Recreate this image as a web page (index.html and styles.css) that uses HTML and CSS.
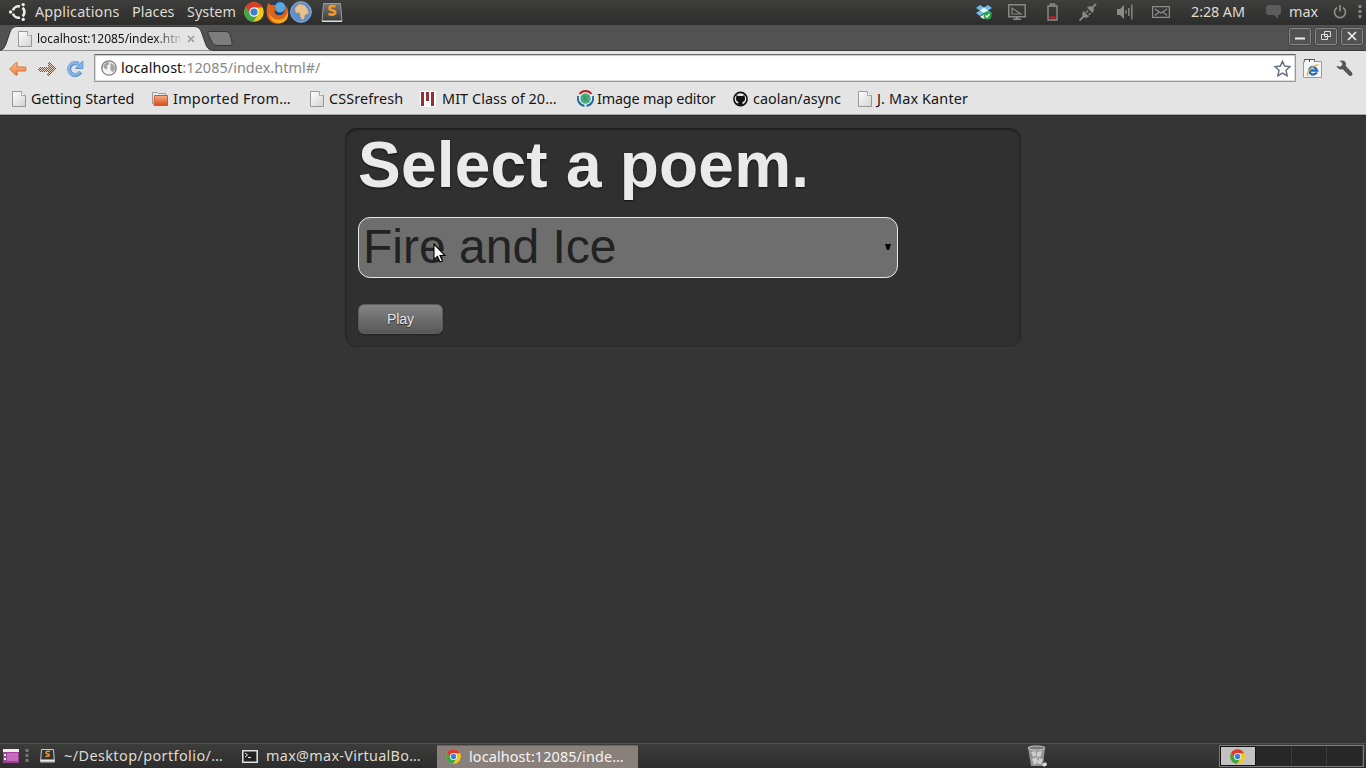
FILE: index.html
```html
<!DOCTYPE html>
<html lang="en">
<head>
<meta charset="utf-8">
<title>localhost:12085/index.html#/</title>
<link rel="stylesheet" href="styles.css">
</head>
<body>
<svg class="defs" width="0" height="0">
  <defs>
    <linearGradient id="paper" x1="0" y1="0" x2="1" y2="1"><stop offset="0" stop-color="#fff"/><stop offset="1" stop-color="#d2d2d2"/></linearGradient>
    <linearGradient id="folder" x1="0" y1="0" x2="0" y2="1"><stop offset="0" stop-color="#f5b184"/><stop offset="1" stop-color="#d5491c"/></linearGradient>
    <linearGradient id="arrow" x1="0" y1="0" x2="0" y2="1"><stop offset="0" stop-color="#f9c090"/><stop offset="1" stop-color="#ec7c3c"/></linearGradient>
    <linearGradient id="key" x1="0" y1="0" x2="0" y2="1"><stop offset="0" stop-color="#777"/><stop offset="1" stop-color="#3c3c3c"/></linearGradient>
    <pattern id="dots" width="2" height="2" patternUnits="userSpaceOnUse"><rect width="2" height="2" fill="#ead6c8"/><rect width="1" height="1" fill="#8a5030"/><rect x="1" y="1" width="1" height="1" fill="#8a5030"/></pattern>
    <symbol id="page" viewBox="0 0 15 16"><path d="M.5.5h9l4 4v11H.5z" fill="url(#paper)" stroke="#979797"/><path d="M9.5.5v4h4" fill="#fff" stroke="#a8a8a8"/></symbol>
    <symbol id="chrome" viewBox="0 0 20 20">
      <circle cx="10" cy="10" r="9.8" fill="#f4c916"/>
      <path d="M1.5 5.1A9.8 9.8 0 0 1 18.6 5.5H10L6 12.5z" fill="#dd3a2d"/>
      <path d="M1.5 5.1A9.8 9.8 0 0 0 9.3 19.8L14 12.3 10 14.5 6 12.3z" fill="#3fa648"/>
      <circle cx="10" cy="10" r="4.8" fill="#f3f6f8"/><circle cx="10" cy="10" r="3.6" fill="#3f7fcb"/>
    </symbol>
  </defs>
</svg>

<header class="panel">
  <svg class="ubuntu" width="18" height="20" viewBox="0 0 18 20"><g fill="none" stroke="#eee" stroke-width="2.6"><path d="M14.6 5.8A5.7 5.7 0 0 1 14.6 14.2"/><path d="M11.9 15.5A5.7 5.7 0 0 1 5 11.6"/><path d="M11.9 4.5A5.7 5.7 0 0 0 5 8.4"/></g><g fill="#eee"><circle cx="2.6" cy="10" r="1.7"/><circle cx="15.2" cy="2.6" r="1.7"/><circle cx="15.200" cy="17.4" r="1.7"/></g></svg>
  <span class="menu applications">Applications</span>
  <span class="menu places">Places</span>
  <span class="menu system">System</span>
  <svg class="launch-chrome" width="20" height="20"><use href="#chrome"/></svg>
  <svg class="launch-firefox" width="23" height="23" viewBox="0 0 22 22"><circle cx="12" cy="10" r="9.5" fill="#17407f"/><circle cx="13.500" cy="6" r="5" fill="#5ba9de"/><path d="M2 2L5 4Q7 3 9 4L8 7 11 8 8 10Q9 14 13 13.5 17 13 18 9L19 4Q23 10 20 17 16 22 10 21.7 3 21 1 14 0 7 2 2z" fill="#df641a"/><path d="M3 12Q6 18 13 18 19 17 21 10 22 17 17 20 11 23 6 19 3 16 3 12z" fill="#f6a81f"/></svg>
  <svg class="launch-globe" width="22" height="22" viewBox="0 0 22 22"><circle cx="11" cy="11" r="10.3" fill="#5b8fd2" stroke="#8db2e0"/><path d="M5 7L9 3 14 4 17 7 19 12 15 14 14 18 12 19 10 15 10 12 6 12 5 9z" fill="#e9c08f" stroke="#c79258" stroke-width=".6"/></svg>
  <svg class="launch-sublime" width="22" height="21" viewBox="0 0 22 21"><path d="M2.500 1.500h17l1.500 18H1z" fill="url(#key)" stroke="#999"/><path d="M1 18.500h20v1.500H1z" fill="#ddd"/><path d="M14.500 4.500Q9 3 8.500 6 8.500 8 12 8.500 15 9.500 14 11.500 12.500 13.500 7.500 12" fill="none" stroke="#f89820" stroke-width="2.6"/></svg>
  <div class="tray">
    <svg width="16" height="16" viewBox="0 0 16 16"><path d="M4 1L8 3.500 12 1 16 4 12 6.500 16 9 12 12 8 9 4 12 0 9 4 6.500 0 4z" fill="#6ebdf0"/><path d="M4 6.500L8 3.500 12 6.500 8 9zM4 13L8 10 12 13 8 15z" fill="#e6f5ff"/><circle cx="11.500" cy="11.500" r="4" fill="#25a544"/><path d="M9.500 11.500l1.500 1.500 2.500-3" fill="none" stroke="#fff" stroke-width="1.3"/></svg>
    <svg class="t-display" width="18" height="17" viewBox="0 0 18 17"><path d="M.8.8h16.400v12H.8z" fill="none" stroke="#888" stroke-width="1.5"/><path d="M4 4v6h9z" fill="none" stroke="#888" stroke-width="1.2"/><path d="M7.500 13h3v1.500h2.500V16H5v-1.500h2.500z" fill="#888"/></svg>
    <svg class="t-battery" width="11" height="18" viewBox="0 0 11 18"><path d="M1 3h9v14H1zM3.500 2.500V1h4v1.500" fill="none" stroke="#8c8c8c" stroke-width="1.4"/><path d="M2.500 13.500h6v2h-6z" fill="#f01515"/></svg>
    <svg class="t-plug" width="18" height="18" viewBox="0 0 18 18"><path d="M.5 17.500L5 13M12.500 5.500L17 1" fill="none" stroke="#888" stroke-width="1.8"/><path d="M4.500 8L10 13.500Q6.500 16 4.200 13.800 2 11.500 4.500 8zM8 4.500Q11.500 2 13.800 4.200 16 6.500 13.500 10zM6.500 9l2-2 1 1-2 2zM9 11.500l2-2 1 1-2 2z" fill="#888"/></svg>
    <svg class="t-sound" width="16" height="16" viewBox="0 0 16 16"><path d="M0 5h3l4-4v14l-4-4H0z" fill="#8b8b8b"/><path d="M9 6.500v3M11.800 4v8M14.800.5v15" stroke="#8b8b8b" stroke-width="1.4"/></svg>
    <svg class="t-mail" width="18" height="12" viewBox="0 0 18 12"><path d="M.6.6h16.800v10.800H.6zM3 3l6 4 6-4M3 9.500L7 6M15 9.500L11 6" fill="none" stroke="#8d8d8d" stroke-width="1.2"/></svg>
    <span class="menu clock">2:28 AM</span>
    <svg class="t-chat" width="15" height="14" viewBox="0 0 15 14"><path d="M3 0h9q3 0 3 3v4q0 3-3 3v4L8 10H3q-3 0-3-3V3q0-3 3-3z" fill="#5d5d5d"/></svg>
    <span class="menu user">max</span>
    <svg class="t-power" width="14" height="14" viewBox="0 0 14 14"><path d="M4 2.500a5.500 5.500 0 1 0 6 0M7 0v6.500" fill="none" stroke="#8e8e8e" stroke-width="1.7"/></svg>
    <svg class="t-grip" width="4" height="16"><path d="M2 1v15" stroke="#858585" stroke-width="3" stroke-dasharray="3 2"/></svg>
  </div>
</header>

<div class="tabstrip">
  <svg class="tab-shape" width="240" height="26" viewBox="0 0 240 26"><path d="M0 25.500Q4 25 6 19L10 7Q12 1.500 17 1.500H194Q199 1.500 201 6L206 20Q208 25.500 214 25.500V26H0z" fill="#e4e4e4" stroke="#383838"/><path d="M211 6.500H226Q229 6.500 230 9L232 17Q233 20.500 230 20.500H217Q213 20.500 212 17L208 9Q207 6.500 211 6.500z" fill="#7d7d7d" stroke="#363636"/></svg>
  <svg class="tab-icon" width="15" height="16"><use href="#page"/></svg>
  <span class="tab-title">localhost:12085/index.html</span>
  <svg class="tab-close" width="8" height="8"><path d="M1 1l6 6M7 1L1 7" stroke="#999" stroke-width="1.5"/></svg>
  <div class="window-buttons">
    <span><svg width="10" height="10"><path d="M0 7.500h10" stroke="#eee" stroke-width="2"/></svg></span>
    <span><svg width="10" height="10"><path d="M3.500.5h6v5h-6zM.5 3.500h6v5h-6z" fill="#505050" stroke="#ddd"/><path d="M3 5.500h1.500v1.500" stroke="#bbb" fill="none"/></svg></span>
    <span><svg width="10" height="10"><path d="M1 1l8 8M9 1L1 9" stroke="#eee" stroke-width="1.7"/></svg></span>
  </div>
</div>

<nav class="toolbar">
  <svg class="back" width="18" height="16" viewBox="0 0 18 16"><path d="M.7 8L7 1.500Q8.500 1 8.500 3L7.500 6H16.500Q17.500 8 16.500 10H7.500L8.500 13Q8 15 6.500 14z" fill="url(#arrow)" stroke="#d8733c"/></svg>
  <svg class="forward" width="18" height="16" viewBox="0 0 18 16"><path d="M18 8L11 1 9 2 10.500 5.500H1.500L0 7v2l1.500 1.500H10.500L9 14l2 1z" fill="url(#dots)" shape-rendering="crispEdges"/></svg>
  <svg class="reload" width="17" height="17" viewBox="0 0 17 17"><path d="M13.500 12A6 6 0 1 1 11.500 4" fill="none" stroke="#5b95d0" stroke-width="4"/><path d="M15.800 1v7.500H8.300z" fill="#84b5e4" stroke="#5b95d0"/><path d="M13 11.500A6 6 0 1 1 12 4.500" fill="none" stroke="#84b5e4" stroke-width="2.4"/></svg>
  <div class="address">
    <svg class="site" width="16" height="16" viewBox="0 0 16 16"><circle cx="8" cy="8" r="7.200" fill="#f4f4f4" stroke="#7d7d7d" stroke-width="1.3"/><path d="M2.500 5l3-3 3 .5-.5 2-2 1.500.5 2.500-1.500 1-2.500-2zM10 3l3 2 1.300 4-2.300 3-2-1-1-3.500 1-1.500-1-1z" fill="#a5a5a5"/></svg>
    <span class="url"><b>localhost</b>:12085/index.html#/</span>
    <svg class="star" width="17" height="17" viewBox="0 0 17 17"><path d="M8.500 1.200L10.600 6.100 16 6.700 12 10.300 13.100 15.700 8.500 13 3.900 15.700 5 10.300 1 6.700 6.400 6.100z" fill="#fff" stroke="#667085" stroke-width="1.5"/></svg>
  </div>
  <svg class="ie" width="19" height="19" viewBox="0 0 19 19"><path d="M.5 2.500h18v16H.5z" fill="#f5f5f5" stroke="#999"/><path d="M1.500 3V.5h10V3" fill="#f5f5f5" stroke="#777"/><path d="M1.500.5h10M6.500.5V3" stroke="#444" stroke-dasharray="3 1"/><path d="M14 13.500Q10.500 17 7.300 14.300 5 11 8 8.500 12 6.500 14 11.500H7.500" fill="none" stroke="#2070c4" stroke-width="2.4"/><path d="M5.500 16.500Q2.500 16 7 10.500 12.500 5 15.500 6" fill="none" stroke="#e9b72c" stroke-width="1.4"/></svg>
  <svg class="wrench" width="17" height="17" viewBox="0 0 17 17"><path d="M3.500 1Q8-.5 10 3L9.800 6 16 12.500Q17 14.500 15.500 15.700 14 16.500 12.500 15L6.700 9.300Q2 10 .3 5.800L4 6.800 6.300 5 6 2.800z" fill="#565656"/></svg>
</nav>

<nav class="bookmarks">
  <a class="b1"><svg width="15" height="16"><use href="#page"/></svg><span>Getting Started</span></a>
  <a class="b2"><svg width="17" height="16" viewBox="0 0 17 16"><path d="M.5 13V1.500h5l1 1h7V5" fill="#eee" stroke="#999"/><path d="M2.500 4.500h13v10H2z" fill="url(#folder)" stroke="#cf592c"/></svg><span>Imported From…</span></a>
  <a class="b3"><svg width="15" height="16"><use href="#page"/></svg><span>CSSrefresh</span></a>
  <a class="b4"><svg width="16" height="16"><path fill="#fff" d="M0 0h16v16H0z"/><path fill="#943033" d="M1 1h3v14H1zM6 1h3v9H6zM11 1h3v14h-3z"/></svg><span>MIT Class of 20…</span></a>
  <a class="b5"><svg width="17" height="17" viewBox="0 0 17 17"><circle cx="8.500" cy="8.500" r="7.500" fill="#eee"/><path d="M2.500 4A7.500 7.500 0 0 1 14.500 4" fill="none" stroke="#b22224" stroke-width="2"/><path d="M1.300 6A7.300 7.300 0 0 0 7.500 15.700M15.700 6A7.300 7.300 0 0 1 9.500 15.700" fill="none" stroke="#2668a0" stroke-width="2"/><circle cx="8.500" cy="8.500" r="5.200" fill="#4eae83"/><path d="M5 5.500l7 6M5 10.500l7-5M8 4.500v8" stroke="#2b8a69" stroke-width=".8"/></svg><span>Image map editor</span></a>
  <a class="b6"><svg width="15" height="16" viewBox="0 0 15 16"><circle cx="7.500" cy="8" r="6.600" fill="#e8e8e8" stroke="#111" stroke-width="1.600"/><path d="M3.500 4L5.500 5H9.500L11.500 4 12 7.500Q12 10.500 9.500 11V15H5.500V13L3 12 5.500 12V11Q3 10.500 3 7.500z" fill="#111"/></svg><span>caolan/async</span></a>
  <a class="b7"><svg width="15" height="16"><use href="#page"/></svg><span>J. Max Kanter</span></a>
</nav>

<main class="content">
  <section class="card">
    <h1>Select a poem.</h1>
    <div class="picker"><select><option>Fire and Ice</option></select><svg class="caret" width="6" height="6"><path d="M0 0h6L4 6H2z" fill="#000"/></svg></div>
    <button>Play</button>
  </section>
</main>

<footer class="taskbar">
  <svg class="desk" width="16" height="14" viewBox="0 0 16 14"><path d="M0 0h16v14H0z" fill="#9b4292"/><path d="M0 0h16v3H0z" fill="#eee"/><path d="M1 5h2v2H1zM1 9h2v2H1z" fill="#eee"/><path d="M4 4h11v8H4z" fill="#c66aba"/></svg>
  <svg class="grip" width="4" height="16"><path d="M2 1v14" stroke="#777" stroke-width="3" stroke-dasharray="3 2"/></svg>
  <svg class="sub-icon" width="15" height="14" viewBox="0 0 15 14"><path d="M1.500.5h12l1 12.500H.5z" fill="#333" stroke="#ccc"/><path d="M1 11.500h13" stroke="#eee" stroke-width="2"/><path d="M10 2.500Q6 1.500 6 4 7 5 9 5.500 10 8 5.500 7" fill="none" stroke="#f89820" stroke-width="1.5"/></svg>
  <span class="task desktop">~/Desktop/portfolio/…</span>
  <svg class="term-icon" width="16" height="13" viewBox="0 0 16 13"><path d="M.8.8h14.400v11.400H.8z" fill="#222" stroke="#ddd" stroke-width="1.6"/><path d="M3 3l2.500 2L3 7M6 7.500h3" fill="none" stroke="#eee"/></svg>
  <span class="task terminal">max@max-VirtualBo…</span>
  <div class="active-task"><svg width="15" height="15"><use href="#chrome"/></svg><span class="task">localhost:12085/inde…</span></div>
  <svg class="trash" width="20" height="22" viewBox="0 0 20 22"><path d="M1 3h17l-2 18H4z" fill="#929292"/><path d="M4 7l4-1 2 4-4 2zM10 7l5-1-1 5-4 2zM5 14l4-2 3 5-5 3zM12 13l4 1-2 5h-3z" fill="#ccc"/><ellipse cx="9.500" cy="3" rx="8.500" ry="2" fill="#777" stroke="#ccc"/><path d="M15 19l4-2 1 3-3 2z" fill="#ddd"/></svg>
  <div class="workspaces"><span class="on"><svg width="15" height="15"><use href="#chrome"/></svg></span><span></span><span></span><span></span></div>
</footer>

<svg class="cursor" width="14" height="21" viewBox="0 0 14 21"><path d="M1 1v15.500l3.500-3 2.500 5.500 2.500-1.200L7 12.500h5z" fill="#fff" stroke="#000" stroke-width="1.1"/></svg>
</body>
</html>
```
FILE: styles.css
```css
* { box-sizing: border-box; }
body { margin: 0; width: 1366px; height: 768px; overflow: hidden; display: flex; flex-direction: column; background: #353535; font: 14.4px/18px "Noto Sans", sans-serif; position: relative; }
svg { flex: none; display: block; }
.defs { position: absolute; }
span { white-space: nowrap; }

/* desktop panel */
.panel { height: 25px; flex: none; display: flex; align-items: center; padding: 0 0 1px 8px; background: linear-gradient(#3e3e3c, #2d2d2d); color: #dfdbd2; }
.menu { flex: none; }
.applications { width: 97px; margin-left: 9px; letter-spacing: .15px; }
.places { width: 55px; }
.system { width: 57px; }
.launch-firefox { margin-left: 2px; }
.launch-globe { margin-left: 1px; }
.launch-sublime { margin-left: 9px; }
.tray { display: flex; align-items: center; margin-left: 633px; }
.t-display { margin-left: 16px; }
.t-battery { margin-left: 21px; }
.t-plug { margin-left: 21px; }
.t-sound { margin-left: 20px; }
.t-mail { margin-left: 19px; }
.clock { margin-left: 21px; width: 55px; letter-spacing: -.1px; }
.t-chat { margin-left: 20px; }
.user { margin-left: 8px; width: 30px; }
.t-power { margin-left: 14px; }
.t-grip { margin-left: 11px; }

/* browser frame */
.tabstrip { height: 26px; flex: none; display: flex; align-items: center; background: #525252; border-bottom: 1px solid #383838; position: relative; }
.tab-shape { position: absolute; left: 0; top: 0; }
.tab-icon { margin: 3px 0 0 18px; position: relative; }
.tab-title { position: relative; margin: 2px 0 0 4px; width: 143px; overflow: hidden; font-size: 12px; letter-spacing: -.04px; color: #111; -webkit-mask-image: linear-gradient(90deg, #000 118px, transparent 148px); }
.tab-close { position: relative; margin: 3px 0 0 7px; }
.window-buttons { display: flex; gap: 4px; margin: 0 3px 3px auto; }
.window-buttons span { width: 22px; height: 17px; display: flex; align-items: center; justify-content: center; border: 1px solid #888; border-radius: 2px; outline: 1px solid #444; }
.toolbar { height: 35px; flex: none; display: flex; align-items: center; background: #e4e4e4; padding-left: 9px; }
.forward { margin-left: 11px; }
.reload { margin-left: 11px; }
.address { width: 1202px; height: 28px; margin: 0 0 1px 10px; display: flex; align-items: center; background: #fff; border: 1px solid #999; border-top-color: #666; box-shadow: inset 0 1px 1px #ccc, inset 0 0 0 1px #ddd; padding: 0 4px 0 6px; }
.url { margin-left: 4px; color: #888; letter-spacing: .06px; }
.url b { color: #111; font-weight: 400; }
.star { margin-left: auto; }
.ie { margin-left: 7px; }
.wrench { margin-left: 14px; }
.bookmarks { height: 29px; flex: none; display: flex; background: #e4e4e4; border-bottom: 1px solid #aaa; color: #161616; padding: 0 0 3px 12px; }
.bookmarks a { display: flex; align-items: center; flex: none; }
.bookmarks span { margin-left: 4px; }
.b1 { width: 140px; }
.b2 { width: 158px; letter-spacing: .25px; }
.b3 { width: 110px; letter-spacing: .1px; }
.b4 { width: 157px; letter-spacing: .08px; }
.b4 span { margin-left: 6px; }
.b5 { width: 156px; letter-spacing: -.2px; }
.bookmarks .b5 span { margin-left: 3px; }
.b6 { width: 125px; }
.bookmarks .b6 span { margin-left: 5px; }
.b7 { letter-spacing: .15px; }

/* page */
.content { flex: 1; background: #353535; border-top: 1px solid #292929; padding-top: 12px; }
.card { width: 676px; height: 219px; margin: 0 auto; padding: 0 13px; background: #303030; border-radius: 12px; box-shadow: inset 0 1px 3px #141414; }
h1 { margin: 0; padding-top: 1px; font: bold 64px/72px "Liberation Sans", sans-serif; letter-spacing: .22px; color: #eaeaea; text-shadow: 0 1px 2px #111; }
.picker { position: relative; width: 540px; height: 61px; margin-top: 16px; }
select { appearance: none; width: 540px; height: 61px; display: block; background: #6e6e6e; border: 1px solid #e6e6e6; border-radius: 12px; padding: 0 0 3px 4px; color: #222; font: 48px "Liberation Sans", sans-serif; }
.caret { position: absolute; right: 7px; top: 27px; }
button { display: block; width: 85px; height: 30px; margin-top: 26px; padding: 0; border: 1px solid #5c5c5c; border-radius: 6px; background: linear-gradient(#848484, #585858); color: #e8e8e8; font: 14px "Liberation Sans", sans-serif; text-shadow: 0 1px 1px #222; box-shadow: 0 1px 2px #222; }
.cursor { position: absolute; left: 433px; top: 243px; }

/* taskbar */
.taskbar { height: 25px; flex: none; display: flex; align-items: center; background: linear-gradient(#3c3c3a, #2d2d2d); border-top: 1px solid #505050; color: #dfdbd2; padding-left: 3px; }
.grip { margin-left: 6px; }
.sub-icon { margin-left: 11px; }
.task { flex: none; }
.desktop { margin-left: 9px; width: 160px; letter-spacing: .43px; }
.term-icon { margin-left: 18px; }
.terminal { margin-left: 8px; width: 156px; letter-spacing: .3px; }
.active-task { margin-left: 15px; width: 201px; height: 23px; display: flex; align-items: center; background: #89807c; padding-left: 9px; border-top: 1px solid #6b6360; color: #f4f4f4; }
.active-task .task { margin-left: 8px; letter-spacing: .12px; }
.trash { margin-left: 389px; }
.workspaces { display: flex; margin-left: 172px; width: 145px; height: 22px; border: 1px solid #7b7b7b; background: #272727; flex: none; }
.workspaces span { width: 36px; border-right: 1px solid #3b3b3b; display: flex; align-items: center; justify-content: center; }
.workspaces .on { background: #c4c2c0; border: 1px solid #111; }
```
